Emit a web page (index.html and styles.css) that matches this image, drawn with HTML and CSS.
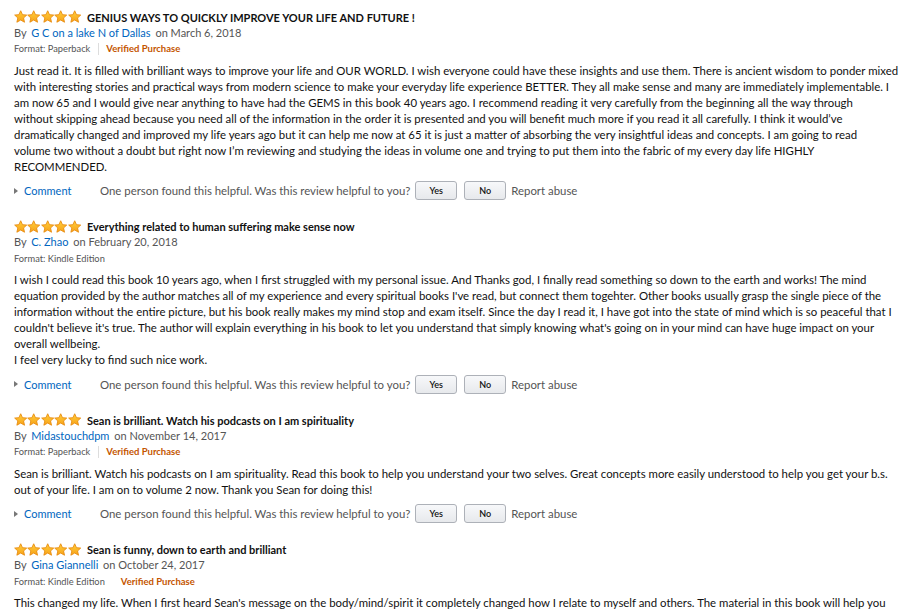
FILE: index.html
```html
<!DOCTYPE html>
<html>
<head>
<meta charset="utf-8">
<link rel="stylesheet" href="styles.css">
</head>
<body>
<svg width="0" height="0" class="defs">
  <defs>
    <linearGradient id="sg" x1="0" y1="0" x2="0" y2="1">
      <stop offset="0" stop-color="#ffce3a"/>
      <stop offset="1" stop-color="#f7a21a"/>
    </linearGradient>
    <symbol id="star" viewBox="0 0 14 14">
      <polygon points="7,0.8 8.9,4.9 13.3,5.3 10,8.3 11,12.8 7,10.5 3,12.8 4,8.3 0.7,5.3 5.1,4.9" fill="url(#sg)" stroke="#e8890c" stroke-width="0.9" stroke-linejoin="round"/>
    </symbol>
  </defs>
</svg>
<div class="reviews">

  <div class="review">
    <div class="title-row">
      <span class="stars"><svg><use href="#star"/></svg><svg><use href="#star"/></svg><svg><use href="#star"/></svg><svg><use href="#star"/></svg><svg><use href="#star"/></svg></span>
      <span class="title">GENIUS WAYS TO QUICKLY IMPROVE YOUR LIFE AND FUTURE !</span>
    </div>
    <div class="byline">By <a class="link">G C on a lake N of Dallas</a> on March 6, 2018</div>
    <div class="format"><span class="fmt sep">Format: Paperback</span><span class="verified">Verified Purchase</span></div>
    <p class="body">Just read it. It is filled with brilliant ways to improve your life and OUR WORLD. I wish everyone could have these insights and use them. There is ancient wisdom to ponder mixed with interesting stories and practical ways from modern science to make your everyday life experience BETTER. They all make sense and many are immediately implementable. I am now 65 and I would give near anything to have had the GEMS in this book 40 years ago. I recommend reading it very carefully from the beginning all the way through<br>without skipping ahead because you need all of the information in the order it is presented and you will benefit much more if you read it all carefully. I think it would’ve dramatically changed and improved my life years ago but it can help me now at 65 it is just a matter of absorbing the very insightful ideas and concepts. I am going to read<br>volume two without a doubt but right now I’m reviewing and studying the ideas in volume one and trying to put them into the fabric of my every day life HIGHLY RECOMMENDED.</p>
    <div class="actions">
      <span class="comment"><span class="tri"></span><a class="link">Comment</a></span>
      <span class="helpful">One person found this helpful. Was this review helpful to you?</span>
      <button class="btn">Yes</button>
      <button class="btn">No</button>
      <span class="report">Report abuse</span>
    </div>
  </div>

  <div class="review">
    <div class="title-row">
      <span class="stars"><svg><use href="#star"/></svg><svg><use href="#star"/></svg><svg><use href="#star"/></svg><svg><use href="#star"/></svg><svg><use href="#star"/></svg></span>
      <span class="title">Everything related to human suffering make sense now</span>
    </div>
    <div class="byline">By <a class="link">C. Zhao</a> on February 20, 2018</div>
    <div class="format"><span class="fmt">Format: Kindle Edition</span></div>
    <p class="body">I wish I could read this book 10 years ago, when I first struggled with my personal issue. And Thanks god, I finally read something so down to the earth and works! The mind equation provided by the author matches all of my experience and every spiritual books I've read, but connect them togehter. Other books usually grasp the single piece of the information without the entire picture, but his book really makes my mind stop and exam itself. Since the day I read it, I have got into the state of mind which is so peaceful that I couldn't believe it's true. The author will explain everything in his book to let you understand that simply knowing what's going on in your mind can have huge impact on your overall wellbeing.<br>I feel very lucky to find such nice work.</p>
    <div class="actions">
      <span class="comment"><span class="tri"></span><a class="link">Comment</a></span>
      <span class="helpful">One person found this helpful. Was this review helpful to you?</span>
      <button class="btn">Yes</button>
      <button class="btn">No</button>
      <span class="report">Report abuse</span>
    </div>
  </div>

  <div class="review">
    <div class="title-row">
      <span class="stars"><svg><use href="#star"/></svg><svg><use href="#star"/></svg><svg><use href="#star"/></svg><svg><use href="#star"/></svg><svg><use href="#star"/></svg></span>
      <span class="title">Sean is brilliant. Watch his podcasts on I am spirituality</span>
    </div>
    <div class="byline">By <a class="link">Midastouchdpm</a> on November 14, 2017</div>
    <div class="format"><span class="fmt sep">Format: Paperback</span><span class="verified">Verified Purchase</span></div>
    <p class="body">Sean is brilliant. Watch his podcasts on I am spirituality. Read this book to help you understand your two selves. Great concepts more easily understood to help you get your b.s. out of your life. I am on to volume 2 now. Thank you Sean for doing this!</p>
    <div class="actions">
      <span class="comment"><span class="tri"></span><a class="link">Comment</a></span>
      <span class="helpful">One person found this helpful. Was this review helpful to you?</span>
      <button class="btn">Yes</button>
      <button class="btn">No</button>
      <span class="report">Report abuse</span>
    </div>
  </div>

  <div class="review">
    <div class="title-row">
      <span class="stars"><svg><use href="#star"/></svg><svg><use href="#star"/></svg><svg><use href="#star"/></svg><svg><use href="#star"/></svg><svg><use href="#star"/></svg></span>
      <span class="title">Sean is funny, down to earth and brilliant</span>
    </div>
    <div class="byline">By <a class="link">Gina Giannelli</a> on October 24, 2017</div>
    <div class="format"><span class="fmt gap">Format: Kindle Edition</span><span class="verified">Verified Purchase</span></div>
    <p class="body">This changed my life. When I first heard Sean's message on the body/mind/spirit it completely changed how I relate to myself and others. The material in this book will help you understand yourself and others in a new and deeper way and will help you find peace and freedom in your everyday life and relationships.</p>
  </div>

</div>
</body>
</html>
```

FILE: styles.css
```css
html, body {
  margin: 0;
  padding: 0;
  background: #ffffff;
}
body {
  font-family: "Lato", "Liberation Sans", sans-serif;
  color: #111111;
  font-size: 11px;
}
.defs {
  position: absolute;
  width: 0;
  height: 0;
}
.reviews {
  width: 885px;
  padding: 9.5px 0 0 14px;
}
.review {
  margin-bottom: 18.5px;
}
.title-row {
  display: flex;
  align-items: center;
  height: 15px;
}
.stars {
  display: flex;
  gap: 0;
  margin-right: 6px;
}
.stars svg {
  width: 13.4px;
  height: 13.4px;
  display: block;
}
.title {
  font-weight: 700;
  font-size: 11px;
  line-height: 15px;
}
.byline {
  line-height: 16px;
  color: #555555;
  font-size: 11px;
}
.link {
  color: #0066c0;
  margin: 0 2px;
}
.format {
  display: flex;
  align-items: center;
  font-size: 9.3px;
  line-height: 16px;
  margin-top: 0.5px;
}
.fmt {
  color: #555555;
}
.fmt.sep {
  padding-right: 8px;
  margin-right: 7px;
  border-right: 1px solid #dddddd;
  line-height: 12px;
}
.fmt.gap {
  margin-right: 16px;
}
.verified {
  color: #c45500;
  font-weight: 700;
  font-size: 9.5px;
}
.body {
  margin: 5.5px 0 0 0;
  line-height: 16px;
  font-size: 11.4px;
}
.actions {
  display: flex;
  align-items: center;
  height: 20px;
  margin-top: 6px;
  color: #555555;
  font-size: 11.4px;
}
.comment {
  display: flex;
  align-items: center;
  width: 86px;
  font-size: 11px;
}
.comment .link {
  margin: 0 0 0 6px;
}
.tri {
  width: 0;
  height: 0;
  border-top: 3px solid transparent;
  border-bottom: 3px solid transparent;
  border-left: 4px solid #777777;
}
.helpful {
  margin-right: 5px;
}
.btn {
  width: 42px;
  height: 19px;
  margin: 0 7px 0 0;
  padding: 0;
  font-family: "Lato", "Liberation Sans", sans-serif;
  font-size: 9px;
  font-weight: 600;
  color: #111111;
  background: linear-gradient(#f7f8fa, #e7e9ec);
  border: 1px solid #adb1b8;
  border-radius: 3px;
}
.btn + .btn {
  margin-right: 5px;
}
.report {
  color: #555555;
}
```
